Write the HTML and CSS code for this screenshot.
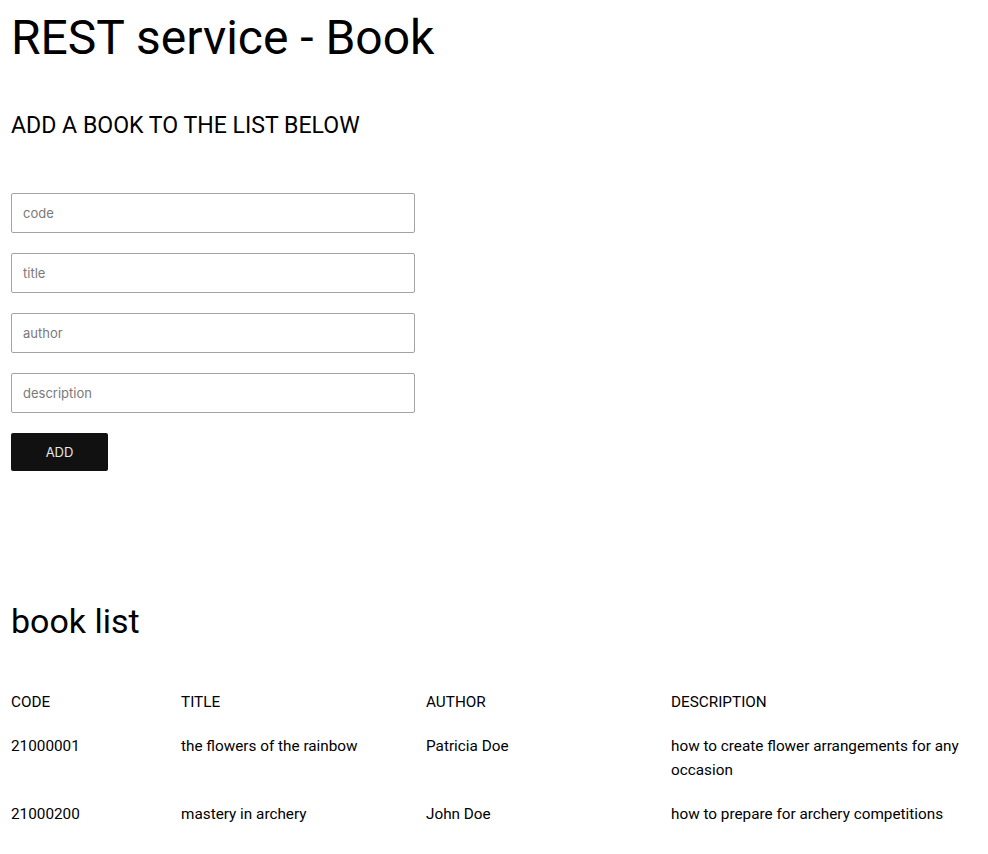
FILE: index.html
```html
<!DOCTYPE html>
<html lang="en">
<head>
<meta charset="utf-8">
<title>REST service - Book</title>
<link rel="stylesheet" href="styles.css">
</head>
<body>
<main class="page">
  <h1 class="title">REST service - Book</h1>
  <h2 class="subtitle">ADD A BOOK TO THE LIST BELOW</h2>
  <form class="book-form">
    <input class="field" type="text" placeholder="code">
    <input class="field" type="text" placeholder="title">
    <input class="field" type="text" placeholder="author">
    <input class="field" type="text" placeholder="description">
    <button class="add-btn" type="button">ADD</button>
  </form>
  <h2 class="list-title">book list</h2>
  <table class="book-table">
    <colgroup>
      <col class="col-code">
      <col class="col-title">
      <col class="col-author">
      <col>
    </colgroup>
    <thead>
      <tr><th>CODE</th><th>TITLE</th><th>AUTHOR</th><th>DESCRIPTION</th></tr>
    </thead>
    <tbody>
      <tr><td>21000001</td><td>the flowers of the rainbow</td><td>Patricia Doe</td><td>how to create flower arrangements for any occasion</td></tr>
      <tr><td>21000200</td><td>mastery in archery</td><td>John Doe</td><td>how to prepare for archery competitions</td></tr>
    </tbody>
  </table>
</main>
</body>
</html>
```
FILE: styles.css
```css
html, body {
  margin: 0;
  padding: 0;
  background: #fff;
  color: #000;
  font-family: Roboto, "Liberation Sans", sans-serif;
}
.page {
  padding: 0 11px;
  display: flex;
  flex-direction: column;
  align-items: flex-start;
}
.title {
  margin: 9px 0 0;
  font-size: 48px;
  line-height: 58px;
  font-weight: 400;
}
.subtitle {
  margin: 44px 0 0;
  font-size: 23.1px;
  line-height: 30px;
  font-weight: 400;
}
.book-form {
  margin-top: 52px;
  display: flex;
  flex-direction: column;
  gap: 20px;
  align-items: flex-start;
}
.field {
  box-sizing: border-box;
  width: 404px;
  height: 40px;
  border: 1px solid #a3a3a3;
  border-radius: 2px;
  padding: 0 11px;
  font-family: Inter, "Noto Sans", sans-serif;
  font-size: 13px;
  color: #222;
  outline: none;
}
.field::placeholder {
  color: #7a7a7a;
}
.add-btn {
  box-sizing: border-box;
  width: 97px;
  height: 38px;
  border: none;
  border-radius: 2px;
  background: #111;
  color: #e6e6e6;
  font-family: Inter, "Noto Sans", sans-serif;
  font-size: 13px;
  cursor: pointer;
}
.list-title {
  margin: 128px 0 0;
  font-size: 34px;
  line-height: 44px;
  font-weight: 400;
}
.book-table {
  margin-top: 37px;
  width: 966px;
  border-collapse: collapse;
  table-layout: fixed;
  font-size: 15.3px;
  line-height: 24px;
}
.col-code { width: 170px; }
.col-title { width: 245px; }
.col-author { width: 245px; }
.book-table th,
.book-table td {
  padding: 10px 0;
  text-align: left;
  vertical-align: top;
  font-weight: 400;
}
```
